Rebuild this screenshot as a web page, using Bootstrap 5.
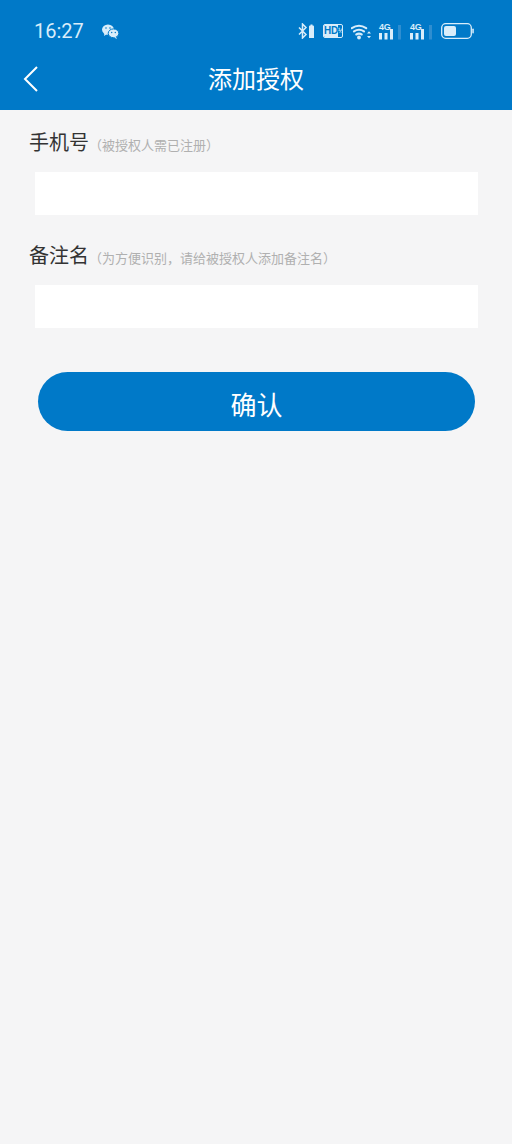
<!DOCTYPE html>
<html lang="zh">
<head>
<meta charset="utf-8">
<title>添加授权</title>
<link rel="stylesheet" href="https://cdn.jsdelivr.net/npm/bootstrap@5.3.0/dist/css/bootstrap.min.css">
<style>
html,body{height:100%}
body{background:#f5f5f6;font-family:"Noto Sans CJK SC","Noto Sans",sans-serif;overflow:hidden}
.app-head{background:#0079c8;height:110px;color:#fff}
.stat-row{height:52px;padding:10px 38px 0 34px;color:#d9edfa}
.stat-time{font-family:Roboto,sans-serif;font-size:20px;line-height:30px;width:68px}
.stat-icons{gap:8px}
.hd-chip{font-family:"Liberation Sans",sans-serif;font-weight:700;height:14px;width:20px;border:1px solid #d9edfa;border-radius:2px;overflow:hidden}
.hd-main{background:#d9edfa;color:#0079c8;font-size:10px;line-height:12px;width:14px;text-align:center;letter-spacing:-.2px}
.hd-frac{color:#d9edfa;font-size:7px;line-height:12px;width:6px;text-align:center}
.sig-box{width:23px;height:17px}
.tiny-4g{font-family:"Liberation Sans",sans-serif;font-weight:700;font-size:9px;line-height:8px;letter-spacing:-.3px;left:0;top:0;color:#d9edfa}
.title-row{height:58px;padding-bottom:7px}
.title-txt{font-size:24px;line-height:34px}
.back-btn{left:21px;top:13px;width:18px;height:28px}
.form-zone{padding:0 34px 0 35px}
.fld-label{height:62px;margin-left:-6px;padding-top:17px;color:#333;font-size:20px;line-height:30px}
.fld-hint{color:#b0b0b0;font-size:13px}
.fld-input{height:43px;background:#fff;border:0;border-radius:0}
.fld-gap{height:8px}
.go-btn{display:block;width:437px;height:59px;margin:44px 0 0 3px;background:#0079c8;border:0;border-radius:30px;color:#fff;font-size:26px;line-height:54px;padding:5px 0 0}
.go-btn:hover{background:#0079c8;color:#fff}
</style>
</head>
<body>
<div class="app-head">
  <div class="stat-row d-flex align-items-center">
    <span class="stat-time">16:27</span>
    <svg width="17" height="15" viewBox="0 0 17 15"><ellipse cx="6" cy="5.600" rx="6" ry="5.200" fill="#d9edfa"/><path d="M2.500 9l-.5 3 3-2z" fill="#d9edfa"/><ellipse cx="11.500" cy="9.300" rx="5.300" ry="4.400" fill="#d9edfa" stroke="#0079c8"/><path d="M14 13l1 2-3-1.500z" fill="#d9edfa"/><circle cx="4" cy="4" r=".8" fill="#0079c8"/><circle cx="8" cy="4" r=".8" fill="#0079c8"/><circle cx="9.700" cy="8.500" r=".7" fill="#0079c8"/><circle cx="13.300" cy="8.500" r=".7" fill="#0079c8"/></svg>
    <div class="stat-icons d-flex align-items-center ms-auto">
      <svg width="17" height="16" viewBox="0 0 17 16"><path d="M1 4.500l7 7-3.500 3.500V1L8 4.500l-7 7" fill="none" stroke="#d9edfa" stroke-width="1.500"/><path d="M11 3.500a1 1 0 0 1 1-1h.5V1.500h2v1h.5a1 1 0 0 1 1 1V15h-5z" fill="#d9edfa"/></svg>
      <span class="hd-chip d-flex"><span class="hd-main">HD</span><span class="hd-frac">½</span></span>
      <svg width="20" height="18" viewBox="0 0 20 18"><path d="M.8 6.200a13 13 0 0 1 14.400 0M3 9.400a9 9 0 0 1 10 0M5.300 12.500a5 5 0 0 1 5.400 0" fill="none" stroke="#d9edfa" stroke-width="2.100" stroke-linecap="round"/><circle cx="8" cy="15.500" r="1.900" fill="#d9edfa"/><path d="M16 11.500h4l-2-2.200zM16 14h4l-2 2.200z" fill="#d9edfa"/></svg>
      <span class="sig-box position-relative d-block">
        <span class="tiny-4g position-absolute">4G</span>
        <svg class="d-block" width="23" height="17" viewBox="0 0 23 17"><rect x="0" y="10" width="3" height="6.500" fill="#d9edfa"/><rect x="5.500" y="10" width="3" height="6.500" fill="#d9edfa"/><rect x="11" y="6" width="3" height="10.500" fill="#d9edfa"/><rect x="19" y="2" width="3" height="14.500" fill="#2f8ed0"/></svg>
      </span>
      <span class="sig-box position-relative d-block">
        <span class="tiny-4g position-absolute">4G</span>
        <svg class="d-block" width="23" height="17" viewBox="0 0 23 17"><rect x="0" y="10" width="3" height="6.500" fill="#d9edfa"/><rect x="5.500" y="10" width="3" height="6.500" fill="#d9edfa"/><rect x="11" y="6" width="3" height="10.500" fill="#d9edfa"/><rect x="19" y="2" width="3" height="14.500" fill="#2f8ed0"/></svg>
      </span>
      <svg width="33" height="16" viewBox="0 0 33 16"><rect x=".7" y=".7" width="29.600" height="14.600" rx="4" fill="none" stroke="#d9edfa" stroke-width="1.300"/><rect x="3" y="3" width="12" height="10" rx="2" fill="#d9edfa"/><rect x="31.300" y="5.500" width="1.500" height="5" rx=".7" fill="#d9edfa"/></svg>
    </div>
  </div>
  <div class="title-row position-relative d-flex align-items-center justify-content-center">
    <svg class="back-btn position-absolute" viewBox="0 0 18 28"><path d="M16 2L4 14l12 12" fill="none" stroke="#fff" stroke-width="2"/></svg>
    <span class="title-txt">添加授权</span>
  </div>
</div>
<form class="form-zone">
  <div class="fld-label">手机号<span class="fld-hint">（被授权人需已注册）</span></div>
  <input class="fld-input form-control" type="text" aria-label="手机号">
  <div class="fld-gap"></div>
  <div class="fld-label">备注名<span class="fld-hint">（为方便识别，请给被授权人添加备注名）</span></div>
  <input class="fld-input form-control" type="text" aria-label="备注名">
  <button type="button" class="btn go-btn">确认</button>
</form>
<script src="https://cdn.jsdelivr.net/npm/bootstrap@5.3.0/dist/js/bootstrap.bundle.min.js"></script>
</body>
</html>
